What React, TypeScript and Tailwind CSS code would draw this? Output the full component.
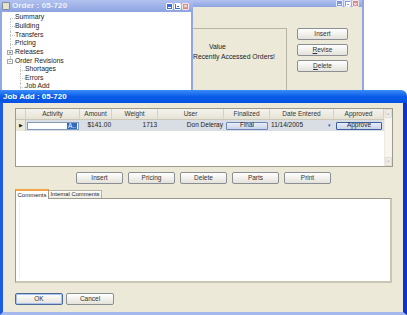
import React from 'react';

const ui = "font-['Liberation_Sans',Arial,sans-serif]";

interface BtnProps {
  children?: React.ReactNode;
  className?: string;
  isDefault?: boolean;
}

// XP style push button, scaled down
const XpButton: React.FC<BtnProps> = ({ children, className = '', isDefault }) => (
  <div
    className={`flex items-center justify-center rounded-[2px] border bg-linear-to-b from-white to-[#e4e2da] text-[6.5px] leading-none text-[#333] whitespace-nowrap ${
      isDefault ? 'border-[#4a6a9a] shadow-[inset_0_0_0_1px_#a9c2ee]' : 'border-[#8a8f96]'
    } ${className}`}
  >
    {children}
  </div>
);

const TitleButtons: React.FC<{ active?: boolean }> = ({ active }) => {
  const base = active ? 'bg-[#3b6fe0] border-white' : 'bg-[#7f97df] border-[#e8edfb]';
  return (
    <div className="flex gap-[1px] items-center">
      <div className={`w-[7px] h-[7px] rounded-[1px] border-[0.5px] ${base} flex items-end justify-center pb-[1px]`}>
        <div className="w-[3px] h-[1px] bg-white" />
      </div>
      <div className={`w-[7px] h-[7px] rounded-[1px] border-[0.5px] ${base} flex items-center justify-center`}>
        <div className="w-[4px] h-[4px] border border-white border-t-2" />
      </div>
      <div className="w-[7px] h-[7px] rounded-[1px] border-[0.5px] border-[#f6e6e6] bg-[#d8868c] flex items-center justify-center text-[6px] leading-none text-white font-bold">
        ×
      </div>
    </div>
  );
};

interface TreeItem {
  label: string;
  level: 1 | 2;
  box?: '+' | '-';
}

const tree: TreeItem[] = [
  { label: 'Summary', level: 1 },
  { label: 'Building', level: 1 },
  { label: 'Transfers', level: 1 },
  { label: 'Pricing', level: 1 },
  { label: 'Releases', level: 1, box: '+' },
  { label: 'Order Revisions', level: 1, box: '-' },
  { label: 'Shortages', level: 2 },
  { label: 'Errors', level: 2 },
  { label: 'Job Add', level: 2 },
];

const TreeRow: React.FC<{ item: TreeItem; index: number }> = ({ item, index }) => (
  <div className="flex items-center h-[8.65px] relative">
    {/* level 1 connector */}
    <div className="w-[13px] h-full relative shrink-0">
      {item.level === 1 && (
        <>
          <div
            className={`absolute left-[8px] w-0 border-l border-dotted border-[#c4c4c4] ${
              index === 0 ? 'top-1/2 bottom-0' : index === 5 ? 'top-0 h-1/2' : 'top-0 bottom-0'
            }`}
          />
          <div className="absolute left-[8px] top-1/2 w-[5px] border-t border-dotted border-[#c4c4c4]" />
          {item.box && (
            <div className="absolute left-[5px] top-[2px] w-[6px] h-[5px] bg-white border-[0.5px] border-[#a8a8a8] flex items-center justify-center text-[5px] leading-none text-[#333]">
              {item.box === '+' ? '+' : '−'}
            </div>
          )}
        </>
      )}
      {item.level === 2 && (
        <div className="absolute left-[18px] top-0 bottom-0 w-0 border-l border-dotted border-[#c4c4c4]" />
      )}
    </div>
    {item.level === 2 && (
      <div className="w-[10px] h-full relative shrink-0">
        <div className="absolute left-[5px] top-1/2 w-[5px] border-t border-dotted border-[#c4c4c4]" />
      </div>
    )}
    <span className="text-[6.8px] leading-none text-[#222]">{item.label}</span>
  </div>
);

const cols = [
  { label: '', w: 'w-[10px]' },
  { label: 'Activity', w: 'w-[54px]' },
  { label: 'Amount', w: 'w-[32px]' },
  { label: 'Weight', w: 'w-[46px]' },
  { label: 'User', w: 'w-[66px]' },
  { label: 'Finalized', w: 'w-[46px]' },
  { label: 'Date Entered', w: 'w-[64px]' },
  { label: 'Approved', w: 'w-[50px]' },
];

const App: React.FC = () => {
  return (
    <div className={`relative w-[407px] h-[315px] bg-white overflow-hidden ${ui}`}>
      {/* back window: order list */}
      <div className="absolute left-0 top-0 w-[364px] h-[96px] flex flex-col border-r-2 border-[#93a7e2]">
        <div className="h-[12px] bg-linear-to-b from-[#b2c2ef] to-[#8ea3e1] flex items-center justify-end pr-[3px]">
          <TitleButtons />
        </div>
        <div className="flex-1 bg-[#ece9d8] flex pt-[21px]">
          <div className="ml-[130px] w-[157px] h-[70px] border border-[#b9b5a4] flex flex-col text-[6.8px] leading-none text-[#222]">
            <span className="ml-[78px] mt-[15px]">Value</span>
            <span className="ml-[62px] mt-[3px] whitespace-nowrap">Recently Accessed Orders!</span>
          </div>
          <div className="ml-[10px] flex flex-col gap-[4px] w-[51px]">
            <XpButton className="h-[12px]">Insert</XpButton>
            <XpButton className="h-[12px]">
              <span><u>R</u>evise</span>
            </XpButton>
            <XpButton className="h-[12px]">
              <span><u>D</u>elete</span>
            </XpButton>
          </div>
        </div>
      </div>

      {/* tree window */}
      <div className="absolute left-0 top-0 w-[193px] h-[96px] flex flex-col">
        <div className="h-[12px] bg-linear-to-b from-[#b2c2ef] to-[#8ea3e1] flex items-center pl-[2px] pr-[4px]">
          <div className="w-[8px] h-[8px] bg-[#e8e2c8] border border-[#7a8aa0] rounded-[1px] mr-[2px]" />
          <span className="text-[8px] leading-none font-bold text-[#eef2fc] tracking-[0.1px]">Order : 05-720</span>
          <div className="ml-auto">
            <TitleButtons active />
          </div>
        </div>
        <div className="flex-1 bg-white border-l-2 border-r-2 border-[#93a7e2] pt-[1.4px]">
          {tree.map((item, i) => (
            <TreeRow key={item.label} item={item} index={i} />
          ))}
        </div>
      </div>

      {/* active window: Job Add */}
      <div className="absolute left-0 top-[90px] w-[407px] h-[225px] flex flex-col rounded-tr-[6px] overflow-hidden">
        <div className="h-[13px] shrink-0 bg-linear-to-b from-[#3a8cf8] via-[#0a5ce8] to-[#0553e0] flex items-center pl-[3px]">
          <span className="text-[8px] leading-none font-bold text-white">Job Add : 05-720</span>
        </div>
        <div className="flex-1 flex bg-[#ece9d8] border-l-[3px] border-r-[4px] border-b-[3px] border-l-[#1a5de3] border-r-[#0b34cc] border-b-[#a4b8ee]">
          <div className="flex flex-col pl-[12px] pt-[5px]">
            {/* grid */}
            <div className="w-[378px] h-[59px] border border-[#9d9a8c] bg-white flex">
              <div className="flex flex-col">
                <div className="flex h-[11px] bg-linear-to-b from-[#f4f3ee] to-[#e6e3d4] border-b border-[#cbc7b8]">
                  {cols.map((c) => (
                    <div
                      key={c.label || 'rh'}
                      className={`${c.w} h-full flex items-center justify-center text-[6.5px] leading-none text-[#333] border-r border-[#d6d2c2] whitespace-nowrap`}
                    >
                      {c.label}
                    </div>
                  ))}
                </div>
                <div className="flex h-[11px] bg-[#d9dde4] text-[6.5px] leading-none text-[#222] whitespace-nowrap">
                  <div className="w-[10px] flex items-center justify-center bg-[#ece9d8] border-r border-[#cbc7b8] text-[5px]">▶</div>
                  <div className="w-[54px] flex items-center px-[1px]">
                    <div className="w-full h-[8px] bg-white border border-[#7f9db9] flex items-center justify-end pr-[1px]">
                      <span className="bg-[#316ac5] text-white px-[1px] leading-[6px]">A..</span>
                    </div>
                  </div>
                  <div className="w-[32px] flex items-center justify-end pr-[1px]">$141.00</div>
                  <div className="w-[46px] flex items-center justify-end pr-[1px]">1713</div>
                  <div className="w-[66px] flex items-center justify-end pr-[1px]">Don Deleray</div>
                  <div className="w-[46px] flex items-center px-[2px]">
                    <div className="w-full h-[8px] border border-[#6b86b8] rounded-[1px] bg-linear-to-b from-[#e9eef8] to-[#c8d3e8] flex items-center justify-center">Final</div>
                  </div>
                  <div className="w-[64px] flex items-center pl-[1px]">
                    <span>11/14/2005</span>
                    <div className="ml-auto mr-[2px] w-[6px] h-[6px] flex items-center justify-center text-[5px] text-[#2a5bd6]">▾</div>
                  </div>
                  <div className="w-[50px] flex items-center px-[2px]">
                    <div className="w-full h-[8px] border border-[#3d5f9e] rounded-[1px] bg-linear-to-b from-[#e9eef8] to-[#c8d3e8] flex items-center justify-center">Approve</div>
                  </div>
                </div>
              </div>
              {/* scrollbar */}
              <div className="w-[9px] ml-auto bg-[#f6f5f0] flex flex-col justify-between border-l border-[#eeeae0]">
                <div className="h-[9px] bg-[#eeedea] border border-[#e0ddd5] rounded-[1px] flex items-center justify-center text-[5px] text-[#c6c4bc] leading-none">▴</div>
                <div className="h-[9px] bg-[#eeedea] border border-[#e0ddd5] rounded-[1px] flex items-center justify-center text-[5px] text-[#c6c4bc] leading-none">▾</div>
              </div>
            </div>

            {/* action buttons */}
            <div className="flex gap-[5px] mt-[5px] pl-[61px]">
              {['Insert', 'Pricing', 'Delete', 'Parts', 'Print'].map((b) => (
                <XpButton key={b} className="w-[47px] h-[12px]">
                  {b}
                </XpButton>
              ))}
            </div>

            {/* tabs */}
            <div className="flex items-end mt-[5px] h-[10px] relative z-10">
              <div className="h-[10px] w-[34px] bg-white border border-[#9d9a8c] border-b-0 border-t-2 border-t-[#f2a542] flex items-center justify-center text-[6px] leading-none text-[#222] whitespace-nowrap">
                Comments
              </div>
              <div className="h-[8px] w-[53px] bg-linear-to-b from-white to-[#ecebe5] border border-[#b5b2a4] border-b-0 border-l-0 flex items-center justify-center text-[5.8px] leading-none text-[#222] mb-[1px] whitespace-nowrap">
                Internal Comments
              </div>
            </div>
            <div className="w-[377px] h-[85px] -mt-[1px] bg-white border border-[#9d9a8c] border-b-2 border-r-2 border-b-[#c9c6b6] border-r-[#c9c6b6] p-[3px]">
              <div className="w-full h-full border-l border-[#f0f0f0]" />
            </div>

            {/* ok / cancel */}
            <div className="flex gap-[3px] mt-[10px]">
              <XpButton isDefault className="w-[48px] h-[12px]">OK</XpButton>
              <XpButton className="w-[48px] h-[12px]">Cancel</XpButton>
            </div>
          </div>
        </div>
      </div>
    </div>
  );
};

export default App;
